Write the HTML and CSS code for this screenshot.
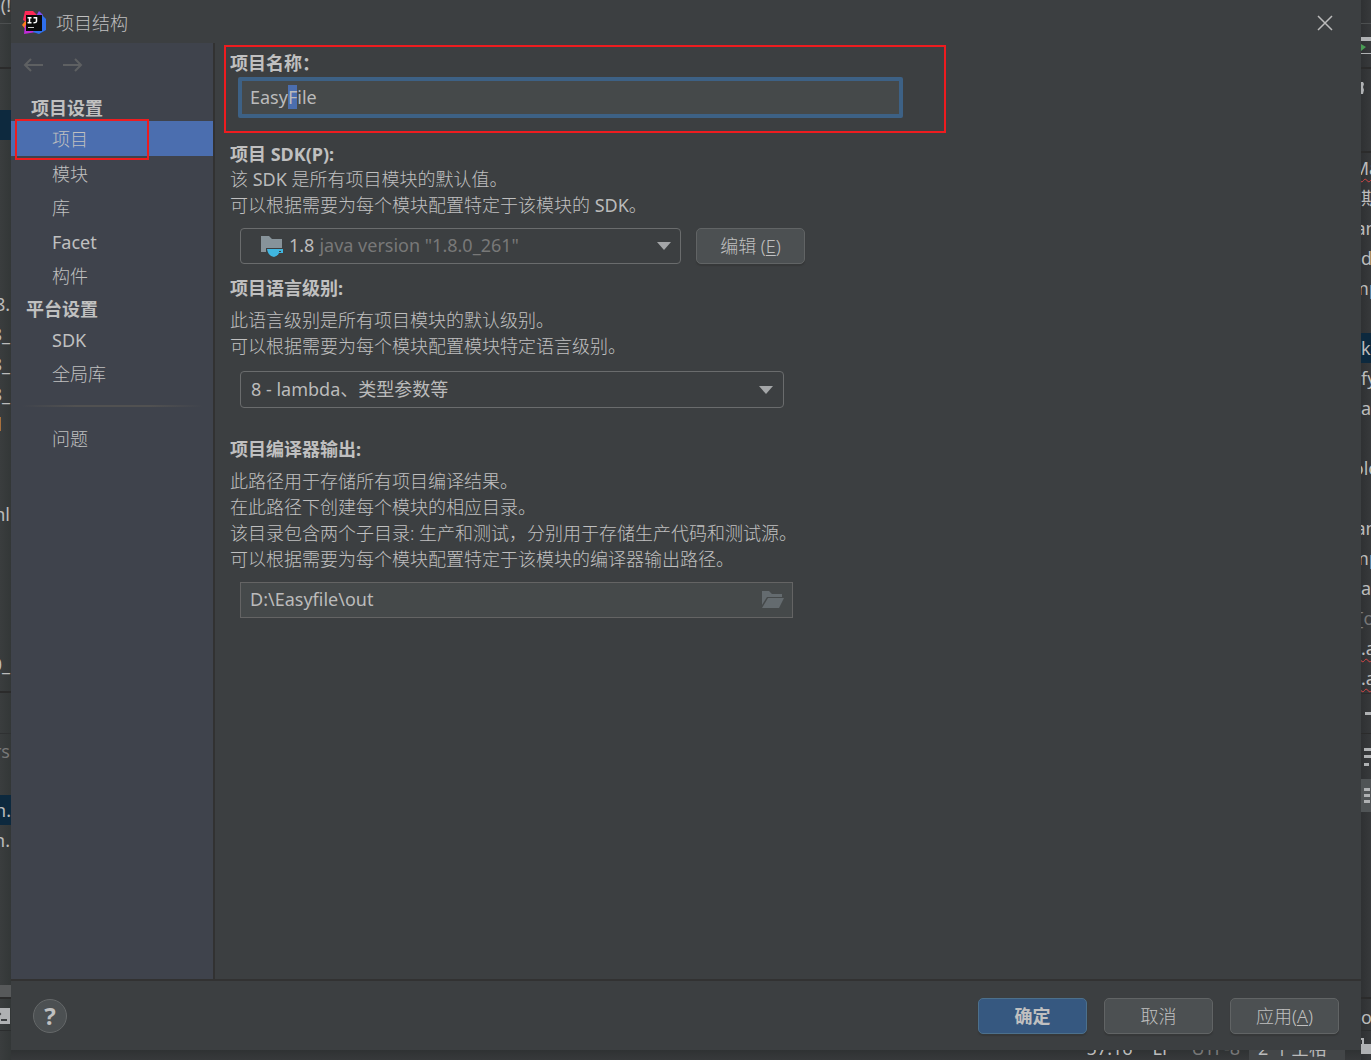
FILE: index.html
```html
<!DOCTYPE html>
<html lang="zh-CN">
<head>
<meta charset="utf-8">
<meta name="viewport" content="width=device-width, initial-scale=1">
<title>项目结构</title>
<link rel="stylesheet" href="styles.css">
</head>
<body>
<div class="desktop">
  <!-- IDE window, left edge -->
  <div class="edge edge-left" aria-hidden="true">
    <div class="edge-toolbar"><span class="code">n(!</span></div>
    <div class="edge-nav"></div>
    <div class="edge-tree">
      <div class="line picked"></div>
      <div class="tree-gap"></div>
      <div class="line">8.</div>
      <div class="line">8_</div>
      <div class="line">8_</div>
      <div class="line">8_</div>
      <div class="line"><span class="mark"></span></div>
      <div class="line"></div>
      <div class="line"></div>
      <div class="line">nl</div>
      <div class="line"></div>
      <div class="line"></div>
      <div class="line"></div>
      <div class="line"></div>
      <div class="line">0_</div>
    </div>
    <div class="edge-tabs"></div>
    <div class="edge-tool">
      <div class="line dim">rs</div>
      <div class="line"></div>
      <div class="line picked">n.</div>
      <div class="line">n.</div>
    </div>
    <div class="scroll-thumb"></div>
    <div class="edge-stripe">
      <svg class="terminal" viewBox="0 0 10 16"><path fill="#afb1b3" d="M0 0h10v16H0z"/><path fill="none" stroke="#3c3f41" stroke-width="2" d="M-2 4l2 2-2 2M1 12h6"/></svg>
    </div>
    <div class="edge-status"></div>
  </div>

  <div class="dialog" role="dialog" aria-labelledby="dialog-title">
    <header class="titlebar">
      <svg class="logo" viewBox="0 0 24 24" aria-hidden="true">
        <path fill="#fc801d" d="M0 14l4-5 3 4-3 6z"/>
        <path fill="#fe2857" d="M3 0h8l5 5-8 8-7-4z"/>
        <path fill="#c02bd8" d="M2 23l1-9 11 7-6 1z"/>
        <path fill="#7a4ff0" d="M14 5l3-5 4 4-3 4z"/>
        <path fill="#2f6fec" d="M20 4l4 4v11l-7 4-6-2 5-12z"/>
        <path fill="#0a0a0a" d="M4 4h16v16H4z"/>
        <path fill="none" stroke="#fff" stroke-width="1.5" d="M5.500 6.700h4M7.500 7v5M5.500 11.700h4M11.500 6.700h3v3.500q0 1.600-3 1.500"/>
        <path fill="#ccc" d="M6 16h6v1H6z"/>
      </svg>
      <h1 id="dialog-title">项目结构</h1>
      <button class="close" type="button" aria-label="关闭">
        <svg viewBox="0 0 16 16"><path d="M1 1l14 14M15 1L1 15"/></svg>
      </button>
    </header>

    <div class="workspace">
      <nav class="sidebar">
        <div class="history">
          <button type="button" aria-label="后退"><svg viewBox="0 0 20 14"><path d="M20 7H2M8 1L2 7l6 6"/></svg></button>
          <button type="button" aria-label="前进"><svg viewBox="0 0 20 14"><path d="M0 7h18M12 1l6 6-6 6"/></svg></button>
        </div>
        <h2 class="group first">项目设置</h2>
        <a class="item selected" href="#project" aria-current="page">项目</a>
        <a class="item" href="#modules">模块</a>
        <a class="item" href="#libraries">库</a>
        <a class="item latin" href="#facets">Facet</a>
        <a class="item" href="#artifacts">构件</a>
        <h2 class="group">平台设置</h2>
        <a class="item latin" href="#sdks">SDK</a>
        <a class="item" href="#global">全局库</a>
        <hr>
        <a class="item" href="#problems">问题</a>
      </nav>

      <main class="content">
        <section class="name-group">
          <label class="heading" for="name">项目名称：</label>
          <input class="text name" id="name" type="text" value="EasyFile" autocomplete="off" spellcheck="false">
        </section>

        <section class="sdk-group">
          <label class="heading" for="sdk">项目 SDK(P):</label>
          <p>该 <span class="latin">SDK</span> 是所有项目模块的默认值。<br>可以根据需要为每个模块配置特定于该模块的 <span class="latin">SDK</span>。</p>
          <div class="row">
            <div class="combo sdk">
              <svg class="jdk" viewBox="0 0 24 22" aria-hidden="true"><path fill="#87939a" d="M1 1h8l3 3h10v9H6v4H1z"/><path fill="#40b6e0" d="M7 14h16v4h-4q-1 3-5 4-6-1-7-8zm12 2v1h2v-1z"/></svg>
              <span>1.8</span>
              <select id="sdk"><option>java version "1.8.0_261"</option></select>
              <svg class="arrow" viewBox="0 0 14 8" aria-hidden="true"><path d="M0 0h14L7 8z"/></svg>
            </div>
            <button class="button" type="button">编辑 (<u>E</u>)</button>
          </div>
        </section>

        <section class="level-group">
          <label class="heading" for="level">项目语言级别:</label>
          <p>此语言级别是所有项目模块的默认级别。<br>可以根据需要为每个模块配置模块特定语言级别。</p>
          <div class="combo level">
            <select id="level"><option>8 - lambda、类型参数等</option></select>
            <svg class="arrow" viewBox="0 0 14 8" aria-hidden="true"><path d="M0 0h14L7 8z"/></svg>
          </div>
        </section>

        <section class="output-group">
          <label class="heading" for="output">项目编译器输出:</label>
          <p>此路径用于存储所有项目编译结果。<br>在此路径下创建每个模块的相应目录。<br>该目录包含两个子目录: 生产和测试，分别用于存储生产代码和测试源。<br>可以根据需要为每个模块配置特定于该模块的编译器输出路径。</p>
          <div class="path">
            <input class="text" id="output" type="text" value="D:\Easyfile\out" spellcheck="false">
            <button type="button" aria-label="浏览"><svg viewBox="0 0 24 18"><path d="M1 0h7l3 3h10v3H6L1 14z"/><path d="M7 7h16l-5 10H1z"/></svg></button>
          </div>
        </section>
      </main>
    </div>

    <footer class="actions">
      <button class="help" type="button" aria-label="帮助">?</button>
      <button class="button primary" type="button">确定</button>
      <button class="button" type="button">取消</button>
      <button class="button" type="button">应用(<u>A</u>)</button>
    </footer>
  </div>

  <!-- IDE window, right edge -->
  <div class="edge edge-right" aria-hidden="true">
    <div class="edge-toolbar"></div>
    <div class="edge-nav"><svg viewBox="0 0 10 18"><path fill="#afb1b3" d="M0 0h10v4H0zM0 16h10v1H0z"/><path fill="#499c54" d="M0 7l5 3-5 4z"/></svg></div>
    <div class="edge-tabs"><svg viewBox="0 0 4 14"><path fill="#afb1b3" d="M0 1h2l1 2-1 3 1 3-1 4H0z"/></svg></div>
    <div class="editor">
      <div class="line mid"><span class="error">Ma</span></div>
      <div class="line">期</div>
      <div class="line mid">an</div>
      <div class="line">da</div>
      <div class="line mid">mp</div>
      <div class="line"></div>
      <div class="line picked">ka</div>
      <div class="line">fy</div>
      <div class="line">a</div>
      <div class="line"></div>
      <div class="line mid">olo</div>
      <div class="line"></div>
      <div class="line mid">an</div>
      <div class="line mid">mp</div>
      <div class="line">a</div>
      <div class="line dim mid">[o</div>
      <div class="line"><span class="error">.a</span></div>
      <div class="line"><span class="error">.a</span></div>
    </div>
    <div class="edge-head"><svg viewBox="0 0 10 40"><path fill="#afb1b3" d="M4 18h6v3H4z"/></svg></div>
    <div class="edge-list">
      <svg viewBox="0 0 10 20"><path fill="#afb1b3" d="M3 0h7v3H3zM3 7h7v3H3zM3 15h5v3H3z"/></svg>
      <svg class="active" viewBox="0 0 10 33"><path fill="#afb1b3" d="M3 9h6v3H3zM3 15h6v3H3zM3 21h6v3H3z"/></svg>
    </div>
    <div class="edge-stripe">og</div>
    <div class="edge-status"><svg viewBox="0 0 10 18"><path fill="#afb1b3" d="M0 6h10v10H0z"/><path fill="none" stroke="#afb1b3" stroke-width="2" d="M0 1h2v6"/></svg></div>
  </div>

  <!-- IDE status bar -->
  <div class="statusbar" aria-hidden="true">
    <span>57:16</span><span>LF</span><span class="dim">UTF-8</span><span class="indent">2 个空格</span>
  </div>
</div>
<script src="script.js"></script>
</body>
</html>
```
FILE: styles.css
```css
* { box-sizing: border-box; }

body {
  margin: 0;
  background: #36393b;
  color: #c0c0c0;
  font: 300 18px/26px "Noto Sans", "Noto Sans CJK SC", sans-serif;
}

h1, h2, p { margin: 0; font-size: 18px; font-weight: 300; }
svg { display: block; flex: none; }

button, input, select {
  margin: 0;
  padding: 0;
  border: 0;
  background: none;
  color: inherit;
  font: inherit;
}

.latin, .text, .combo, .edge, .statusbar { color: #bbbbbb; font-weight: 400; }

.desktop {
  display: grid;
  grid-template: minmax(0, 1fr) 10px / 11px minmax(0, 1fr) 10px;
  min-height: 100vh;
}

/* visible edges of the IDE window behind the dialog */
.edge {
  grid-row: 1 / 3;
  display: flex;
  flex-direction: column;
  overflow: hidden;
  white-space: nowrap;
}
.edge-left { grid-column: 1; background: linear-gradient(90deg, #3a3d3e, #333737); }
.edge-right { grid-column: 3; background: linear-gradient(90deg, #2f3133, #37393b); }
.edge-toolbar { height: 24px; border-bottom: 1px solid #4c4f50; }
.edge-left .edge-toolbar { display: flex; justify-content: flex-end; line-height: 10px; }
.edge-nav { height: 45px; border-bottom: 2px solid #2b2b2b; }
.edge-nav svg { width: 10px; height: 18px; margin-top: 13px; }
.edge-tree { padding: 41px 0 12px; border-bottom: 2px solid #2b2b2b; }
.tree-gap { height: 149px; }
.edge-left .edge-tabs { height: 41px; border-bottom: 1px solid #2f3132; }
.edge-right .edge-tabs { height: 84px; padding-top: 12px; border-bottom: 2px solid #2b2b2b; }
.edge-tabs svg { width: 4px; height: 14px; }
.line { display: flex; height: 30px; line-height: 30px; }
.edge-left .line { justify-content: flex-end; }
.edge-left .line:not(.picked) { padding-right: 1px; }
.line.mid { justify-content: center; }
.picked { background: #0d293e; }
.dim { color: #777777; }
.mark { width: 1px; height: 14px; margin: 8px 9px 0 0; background: #a9713d; }
.error { text-decoration: underline wavy #d64545 1px; text-underline-offset: 3px; }
.edge-tool { padding-top: 2px; }
.edge-tool .line:nth-child(2) { height: 29px; }
.scroll-thumb { height: 12px; margin-top: auto; background: #57595a; }
.edge-stripe { height: 34px; border-top: 2px solid #2b2b2b; border-bottom: 1px solid #2b2d2e; line-height: 36px; }
.terminal { width: 10px; height: 16px; margin-top: 9px; }
.edge-status { height: 29px; }
.edge-status svg { width: 10px; height: 18px; margin-top: 7px; }
.edge-head { height: 41px; border-top: 1px solid #2b2b2b; border-bottom: 1px solid #2b2b2b; }
.edge-list { flex: 1; padding-top: 14px; }
.edge-list svg { width: 10px; }
.edge-list .active { margin-top: 11px; background: #505456; }

.statusbar {
  grid-area: 2 / 2;
  display: flex;
  justify-content: flex-end;
  align-items: flex-end;
  gap: 20px;
  overflow: hidden;
  padding-right: 16px;
  background: linear-gradient(#2f3233, #37393b);
  line-height: 24px;
}
.statusbar .indent { width: 96px; margin-left: -11px; padding-left: 9px; background: #434648; }

/* dialog */
.dialog {
  grid-area: 1 / 2;
  display: flex;
  flex-direction: column;
  background: #3c3f41;
}
.titlebar { display: flex; align-items: center; height: 43px; padding: 0 28px 0 11px; }
.logo { width: 24px; height: 24px; margin-top: 2px; }
.titlebar h1 { flex: 1; margin-left: 10px; padding-top: 2px; }
.close svg { width: 16px; height: 16px; margin-top: 2px; fill: none; stroke: #bbbbbb; stroke-width: 1.5; }

.workspace { display: flex; flex: 1; border-bottom: 2px solid #323232; }

.sidebar { flex: 0 0 204px; border-right: 2px solid #323232; background: #3f434c; }
.history { display: flex; gap: 20px; height: 50px; padding: 15px 0 0 12px; }
.history button { width: 20px; height: 14px; }
.history svg { width: 20px; height: 14px; fill: none; stroke: #5e6062; stroke-width: 2; }
.group { height: 30px; padding-left: 15px; font-weight: 700; line-height: 34px; }
.group.first { height: 28px; padding-left: 20px; line-height: 30px; }
.item { display: block; position: relative; height: 34px; padding-left: 41px; color: inherit; line-height: 36px; text-decoration: none; }
.item.selected { height: 35px; background: #4b6eaf; }
.item.selected::after { content: ""; position: absolute; inset: -2px 64px -4px 4px; border: 2px solid #ee1c1f; }
.sidebar hr { height: 2px; margin: 15px 10px 14px; border: 0; background: linear-gradient(90deg, transparent, #515151 30%, #515151 70%, transparent); }

.content { flex: 1; min-width: 0; padding: 2px 15px; }
.heading { display: block; font-weight: 700; }
.name-group { max-width: 722px; height: 88px; margin-left: -6px; padding: 3px 4px 0; border: 2px solid #ee1c1f; }
.text { display: block; width: 100%; border: 1px solid #646464; background: #45494a; outline: 0; }
.name { max-width: 665px; height: 41px; margin: 1px 0 0 8px; padding: 0 8px 2px; border: 4px solid #3d6185; border-radius: 2px; }
.name::selection { background: #4b6eaf; color: #bbbbbb; }

.sdk-group { padding-top: 8px; }
.sdk-group p { margin-top: -1px; }
.row { display: flex; gap: 15px; margin: 10px 0 0 10px; }
.combo { position: relative; display: flex; align-items: center; height: 36px; border: 1px solid #6a6c6d; border-radius: 4px; }
.combo select { flex: 1; min-width: 0; height: 32px; padding-bottom: 2px; appearance: none; outline: 0; }
.combo span { padding-bottom: 2px; }
.combo option { background: #3c3f41; }
.arrow { width: 14px; height: 8px; margin-right: 9px; fill: #a4a6a8; pointer-events: none; }
.sdk { flex: 0 1 441px; padding-left: 19px; }
.sdk select { margin-left: 5px; color: #787878; }
.jdk { width: 24px; height: 22px; margin-right: 5px; }
.button { width: 109px; height: 36px; border: 1px solid #616465; border-radius: 5px; background: #4c5052; box-shadow: 0 2px 1px #363839; }
.button.primary { border-color: #4c708c; background: #365880; font-weight: 700; }
.button u { text-underline-offset: 2px; }

.level-group { padding-top: 11px; }
.level-group p, .output-group p { margin-top: 6px; }
.level { max-width: 544px; height: 37px; margin: 12px 0 0 10px; padding-left: 10px; }
.level .arrow { margin-right: 10px; }

.output-group { padding-top: 28px; }
.path { display: flex; align-items: center; max-width: 553px; height: 36px; margin: 10px 0 0 10px; padding-right: 7px; border: 1px solid #646464; background: #45494a; }
.path .text { flex: 1; min-width: 0; padding: 0 0 2px 9px; border: 0; background: none; }
.path svg { width: 24px; height: 18px; fill: #646b6f; }

.actions { display: flex; align-items: center; gap: 17px; height: 69px; padding: 0 22px; }
.help { width: 34px; height: 34px; margin-right: auto; border: 1px solid #656869; border-radius: 50%; background: #4c5052; font-size: 24px; font-weight: 700; line-height: 32px; }
```
FILE: script.js
```js
// Focus the project name and select its fifth letter.
const nameField = document.getElementById("name");
nameField.focus();
nameField.setSelectionRange(4, 5);
```
